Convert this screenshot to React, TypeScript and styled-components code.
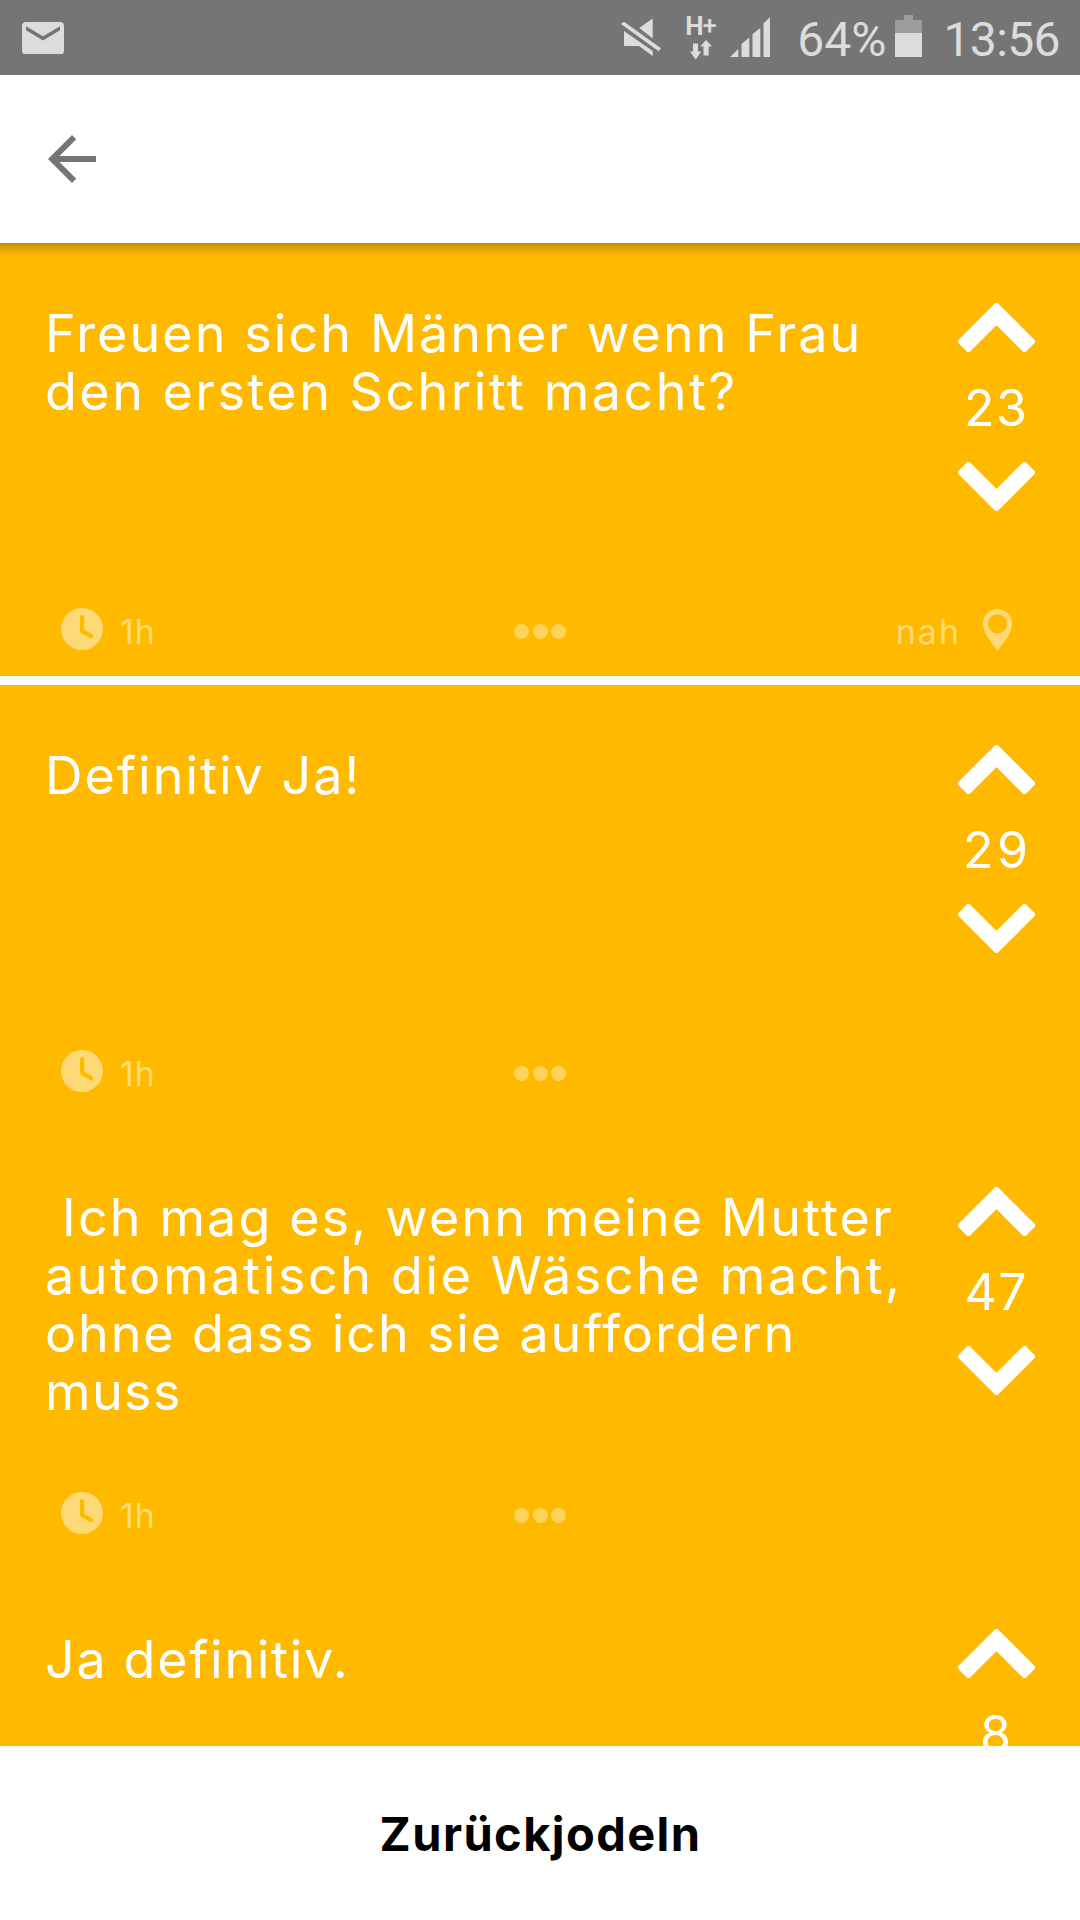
import React from 'react';
import styled, { createGlobalStyle } from 'styled-components';

const YELLOW = '#ffba00';
const STATUS_FG = '#dcdcdc';

const GlobalStyle = createGlobalStyle`
  body {
    margin: 0;
    background: #fff;
    font-family: Inter, 'Liberation Sans', sans-serif;
  }
`;

const Screen = styled.main`
  display: flex;
  flex-direction: column;
  width: 1080px;
  height: 1920px;
  overflow: hidden;
  background: #fff;
`;

const StatusBar = styled.div`
  display: flex;
  justify-content: space-between;
  flex: none;
  height: 75px;
  box-sizing: border-box;
  padding: 0 20px 0 22px;
  background: #757575;
  color: ${STATUS_FG};
`;

const StatusGroup = styled.div`
  display: flex;
  align-items: flex-start;
`;

const StatusIcon = styled.svg<{ $top: number; $right?: number }>`
  display: block;
  flex: none;
  margin-top: ${(p) => p.$top}px;
  margin-right: ${(p) => p.$right ?? 0}px;
  fill: ${STATUS_FG};
`;

const StatusText = styled.span<{ $spacing?: number; $right?: number }>`
  padding-top: 2px;
  margin-right: ${(p) => p.$right ?? 0}px;
  font: 400 48px/75px Roboto, sans-serif;
  letter-spacing: ${(p) => p.$spacing ?? 0}px;
`;

const Network = styled.div`
  display: flex;
  flex-direction: column;
  width: 31px;
  margin-right: 14px;
  padding-top: 13px;
`;

const NetworkLabel = styled.span`
  display: flex;
  height: 26px;
  font: 700 26px/26px Roboto, sans-serif;
`;

const Plus = styled.span`
  margin-left: -1px;
  font-weight: 500;
  font-size: 25px;
`;

const Toolbar = styled.header`
  position: relative;
  z-index: 1;
  display: flex;
  align-items: center;
  flex: none;
  height: 168px;
  padding-left: 36px;
  background: #fff;

  &::after {
    content: '';
    position: absolute;
    top: 100%;
    left: 0;
    right: 0;
    height: 13px;
    background: linear-gradient(rgba(0, 0, 0, 0.25), rgba(0, 0, 0, 0.1) 50%, transparent);
  }
`;

const BackButton = styled.button`
  display: flex;
  padding: 0;
  border: 0;
  background: none;
  fill: #757575;
`;

const Feed = styled.section`
  flex: 1;
  min-height: 0;
  overflow: hidden;
  background: ${YELLOW};
`;

const Card = styled.article<{ $divided?: boolean }>`
  display: flex;
  flex-direction: column;
  height: 442px;
  box-sizing: border-box;
  border-bottom: 9px solid ${(p) => (p.$divided ? '#fff' : YELLOW)};
  background: ${YELLOW};
  color: #fff;
`;

const CardBody = styled.div`
  display: flex;
  justify-content: space-between;
  flex: 1;
  min-height: 0;
  padding: 60px 45px 0;
`;

const Message = styled.div`
  padding-top: 2px;
  font-size: 52px;
  font-weight: 400;
  line-height: 58px;
  white-space: pre;
`;

const Line = styled.div<{ $spacing: number }>`
  letter-spacing: ${(p) => p.$spacing}px;
`;

const Votes = styled.div`
  display: flex;
  flex-direction: column;
  align-items: center;
  width: 77px;
`;

const Chevron = styled.svg<{ $down?: boolean }>`
  display: block;
  flex: none;
  fill: #fff;
  stroke: #fff;
  stroke-width: 6;
  stroke-linejoin: round;
  transform: ${(p) => (p.$down ? 'scaleY(-1)' : 'none')};
`;

const Score = styled.span<{ $spacing: number }>`
  padding-top: 2px;
  padding-right: 2px;
  font-size: 50px;
  font-weight: 400;
  line-height: 108px;
  letter-spacing: ${(p) => p.$spacing}px;
  margin-right: -${(p) => p.$spacing}px;
`;

const CardFooter = styled.footer`
  display: grid;
  grid-template-columns: 1fr auto 1fr;
  align-items: center;
  flex: none;
  height: 89px;
  padding: 0 68px 0 61px;
  color: rgba(255, 255, 255, 0.48);
  font-size: 34px;
  font-weight: 400;
`;

const Meta = styled.div<{ $end?: boolean }>`
  display: flex;
  align-items: center;
  justify-content: ${(p) => (p.$end ? 'flex-end' : 'flex-start')};
  gap: ${(p) => (p.$end ? 22 : 17)}px;
`;

const MetaText = styled.span<{ $spacing: number }>`
  letter-spacing: ${(p) => p.$spacing}px;
`;

const MetaIcon = styled.svg<{ $lift: number }>`
  display: block;
  margin-bottom: ${(p) => p.$lift}px;
  fill: rgba(255, 255, 255, 0.46);
`;

const Dots = styled.div`
  display: flex;
  gap: 3.5px;
  margin-left: 7px;
`;

const Dot = styled.i`
  width: 15px;
  height: 15px;
  border-radius: 50%;
  background: rgba(255, 255, 255, 0.35);
`;

const ReplyButton = styled.button`
  flex: none;
  height: 174px;
  border: 0;
  padding: 1px 0 0 1px;
  background: #fff;
  color: #000;
  font: 700 47px/1 Inter, sans-serif;
  letter-spacing: 1.4px;
`;

type Row = [text: string, spacing: number];
type Post = {
  lines: Row[];
  score: number;
  scoreSpacing: number;
  age?: string;
  place?: string;
  divided?: boolean;
};

const posts: Post[] = [
  {
    lines: [
      ['Freuen sich Männer wenn Frau', 2.1],
      ['den ersten Schritt macht?', 2.5],
    ],
    score: 23,
    scoreSpacing: 1.5,
    age: '1h',
    place: 'nah',
    divided: true,
  },
  { lines: [['Definitiv Ja!', 2.0]], score: 29, scoreSpacing: 3.5, age: '1h' },
  {
    lines: [
      [' Ich mag es, wenn meine Mutter', 2.15],
      ['automatisch die Wäsche macht,', 2.62],
      ['ohne dass ich sie auffordern', 1.87],
      ['muss', 1.4],
    ],
    score: 47,
    scoreSpacing: 1.5,
    age: '1h',
  },
  { lines: [['Ja definitiv.', 1.7]], score: 8, scoreSpacing: 0 },
];

function VoteArrow({ down }: { down?: boolean }) {
  return (
    <Chevron $down={down} width="77" height="49" viewBox="0 0 77 49">
      <path d="M38.5 3 74 38.5 66.5 46 38.5 18 10.5 46 3 38.5Z" />
    </Chevron>
  );
}

function PostFooter({ age, place }: { age: string; place?: string }) {
  return (
    <CardFooter>
      <Meta>
        <MetaIcon $lift={6} width="42" height="42" viewBox="0 0 42 42">
          <path
            fillRule="evenodd"
            d="M21 0a21 21 0 1 1 0 42a21 21 0 1 1 0-42ZM19 9v14a2.2 2.2 0 0 0 1.1 1.9l9 5a2.1 2.1 0 0 0 2.1-3.7L23.2 21.7V9a2.1 2.1 0 0 0-4.2 0Z"
          />
        </MetaIcon>
        <MetaText $spacing={1}>{age}</MetaText>
      </Meta>
      <Dots>
        <Dot />
        <Dot />
        <Dot />
      </Dots>
      <Meta $end>
        {place && (
          <>
            <MetaText $spacing={2}>{place}</MetaText>
            <MetaIcon $lift={3} width="29" height="42" viewBox="0 0 29 42">
              <path
                fillRule="evenodd"
                d="M14.5 0C22.5 0 29 6.5 29 14.5C29 24 21 33 14.5 42C8 33 0 24 0 14.5C0 6.5 6.5 0 14.5 0ZM14.5 5.2a9.5 9.5 0 1 0 0 19a9.5 9.5 0 1 0 0-19Z"
              />
            </MetaIcon>
          </>
        )}
      </Meta>
    </CardFooter>
  );
}

function PostCard({ post }: { post: Post }) {
  return (
    <Card $divided={post.divided}>
      <CardBody>
        <Message>
          {post.lines.map(([text, spacing]) => (
            <Line key={text} $spacing={spacing}>
              {text}
            </Line>
          ))}
        </Message>
        <Votes>
          <VoteArrow />
          <Score $spacing={post.scoreSpacing}>{post.score}</Score>
          <VoteArrow down />
        </Votes>
      </CardBody>
      {post.age && <PostFooter age={post.age} place={post.place} />}
    </Card>
  );
}

export default function App() {
  return (
    <Screen>
      <GlobalStyle />
      <StatusBar>
        <StatusIcon $top={21.5} width="42" height="32.5" viewBox="0 0 42 32.5">
          <path
            fillRule="evenodd"
            d="M4 0H38a4 4 0 0 1 4 4V28.5a4 4 0 0 1-4 4H4a4 4 0 0 1-4-4V4a4 4 0 0 1 4-4ZM4 4.2V8.2L21 18.5 38 8.2V4.2L21 14.3Z"
          />
        </StatusIcon>
        <StatusGroup>
          <StatusIcon $top={18} $right={23} width="41" height="40" viewBox="0 0 41 40">
            <path d="M18.3 10 31.7 0.5V20.5ZM3 13 31.7 33V38L18 28H3ZM0 6 3 3.7 40 30.3 37.7 33.3Z" />
          </StatusIcon>
          <Network>
            <NetworkLabel>
              H<Plus>+</Plus>
            </NetworkLabel>
            <StatusIcon $top={0.5} width="30" height="20" viewBox="0 0 30 20">
              <path d="M8 3.5H13V11.5H16.3L10.7 19.5 5 11.5H8ZM18.5 15.5V6.5H15.3L21 0 27 6.5H23.7V15.5Z" />
            </StatusIcon>
          </Network>
          <StatusIcon $top={17} $right={27} width="40" height="40" viewBox="0 0 40 40">
            <path d="M0 40 8.3 32V40ZM11.5 40V27L19.3 20.5V40ZM22.5 40V17L30.3 11V40ZM33.5 40V6.5L40 0V40Z" />
          </StatusIcon>
          <StatusText $right={9}>64%</StatusText>
          <StatusIcon $top={15} $right={21} width="27" height="42" viewBox="0 0 27 42">
            <path fill="#9c9c9c" d="M9 0h9v5h9v13H0V5h9Z" />
            <path d="M0 18h27v24H0Z" />
          </StatusIcon>
          <StatusText $spacing={-0.6}>13:56</StatusText>
        </StatusGroup>
      </StatusBar>
      <Toolbar>
        <BackButton aria-label="Zurück">
          <svg width="72" height="72" viewBox="0 0 24 24">
            <path d="M20 11H7.83l5.59-5.59L12 4l-8 8 8 8 1.41-1.41L7.83 13H20v-2z" />
          </svg>
        </BackButton>
      </Toolbar>
      <Feed>
        {posts.map((post) => (
          <PostCard key={post.score} post={post} />
        ))}
      </Feed>
      <ReplyButton>Zurückjodeln</ReplyButton>
    </Screen>
  );
}
